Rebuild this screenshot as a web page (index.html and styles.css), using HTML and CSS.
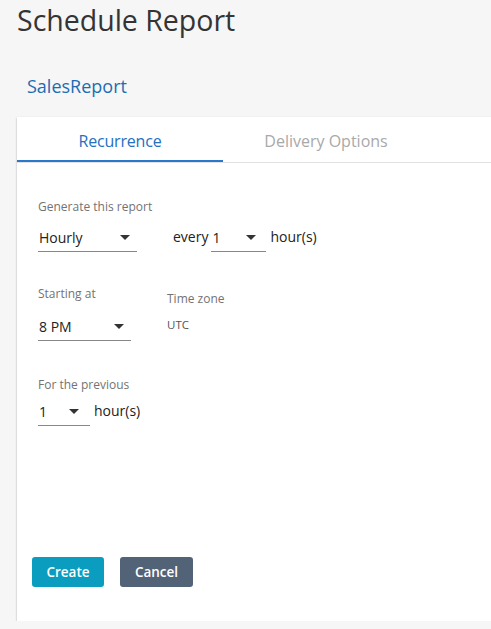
FILE: index.html
```html
<!DOCTYPE html>
<html lang="en">
<head>
    <meta charset="UTF-8">
    <title>Schedule Report</title>
    <link rel="stylesheet" href="styles.css">
</head>
<body>
    <h1 class="page-title">Schedule Report</h1>
    <div class="report-name">SalesReport</div>

    <div class="card">
        <div class="tabs">
            <div class="tab active">Recurrence</div>
            <div class="tab">Delivery Options</div>
        </div>

        <div class="card-body">
            <div class="field">
                <div class="label">Generate this report</div>
                <div class="row">
                    <div class="select w-hourly"><span>Hourly</span><i class="caret"></i></div>
                    <span class="text every">every</span>
                    <div class="select w-every"><span>1</span><i class="caret"></i></div>
                    <span class="text">hour(s)</span>
                </div>
            </div>

            <div class="field start-row">
                <div class="col">
                    <div class="label">Starting at</div>
                    <div class="select w-start"><span>8 PM</span><i class="caret"></i></div>
                </div>
                <div class="col tz">
                    <div class="label">Time zone</div>
                    <div class="tz-value">UTC</div>
                </div>
            </div>

            <div class="field prev-row">
                <div class="label">For the previous</div>
                <div class="row">
                    <div class="select w-prev"><span>1</span><i class="caret"></i></div>
                    <span class="text">hour(s)</span>
                </div>
            </div>

            <div class="actions">
                <button class="btn btn-create">Create</button>
                <button class="btn btn-cancel">Cancel</button>
            </div>
        </div>
    </div>
</body>
</html>
```

FILE: styles.css
```css
/* Page */
body {
    margin: 0;
    padding: 0 0 0 17px;
    background-color: #f6f6f6;
    font-family: "Open Sans", Arial, sans-serif;
    color: #333;
    overflow: hidden;
}

.page-title {
    margin: 0;
    padding-top: 1px;
    font-size: 28.5px;
    font-weight: 400;
    color: #343434;
    line-height: 38px;
}

.report-name {
    margin: 35px 0 0 10px;
    font-size: 18px;
    color: #1b6db3;
    line-height: 24px;
}

/* Card */
.card {
    margin-top: 19px;
    width: 490px;
    height: 504px;
    background-color: #fff;
    box-shadow: 0 1px 2px rgba(0, 0, 0, 0.3);
}

.tabs {
    display: flex;
    border-bottom: 1px solid #e2e2e2;
    height: 45px;
}

.tab {
    width: 206px;
    text-align: center;
    font-size: 16px;
    line-height: 48px;
    color: #a9a9a9;
}

.tab.active {
    color: #2470c2;
    border-bottom: 2px solid #2a78c9;
    height: 43px;
    letter-spacing: -0.2px;
}

.card-body {
    padding: 36px 0 0 21px;
}

.label {
    font-size: 12px;
    color: #737373;
    line-height: 16px;
}

.row {
    display: flex;
    align-items: flex-end;
    margin-top: 9px;
}

.text {
    font-size: 14px;
    color: #222;
    line-height: 22px;
    padding-bottom: 4px;
    margin-left: 4px;
}

.every {
    margin-left: 36px;
    margin-right: 3px;
}

/* Fake select with underline */
.select {
    display: flex;
    align-items: center;
    justify-content: space-between;
    border-bottom: 1px solid #888;
    height: 28px;
    font-size: 14px;
    color: #222;
    padding: 0 7px 0 1px;
    box-sizing: border-box;
}

.caret {
    width: 0;
    height: 0;
    border-left: 5px solid transparent;
    border-right: 5px solid transparent;
    border-top: 5px solid #333;
}

.w-hourly { width: 99px; }
.w-every { width: 55px; padding-right: 10px; }
.w-start { width: 93px; height: 29px; padding-top: 1px; }
.w-prev { width: 52px; padding-right: 11px; }

.start-row {
    display: flex;
    margin-top: 34px;
}

.start-row .label {
    margin-bottom: 10px;
}

.tz {
    margin-left: 36px;
    padding-top: 5px;
}

.tz-value {
    font-size: 11.5px;
    color: #555;
    margin-top: 7px;
}

.prev-row {
    margin-top: 36px;
}

.prev-row .row {
    margin-top: 5px;
}

/* Buttons */
.actions {
    display: flex;
    gap: 16px;
    margin-top: 131px;
    margin-left: -6px;
}

.btn {
    border: none;
    border-radius: 3px;
    height: 30px;
    font-family: inherit;
    font-size: 13.5px;
    font-weight: 600;
    color: #fff;
    padding: 0;
}

.btn-create {
    width: 72px;
    background-color: #0b9dbf;
}

.btn-cancel {
    width: 73px;
    background-color: #526378;
}
```
